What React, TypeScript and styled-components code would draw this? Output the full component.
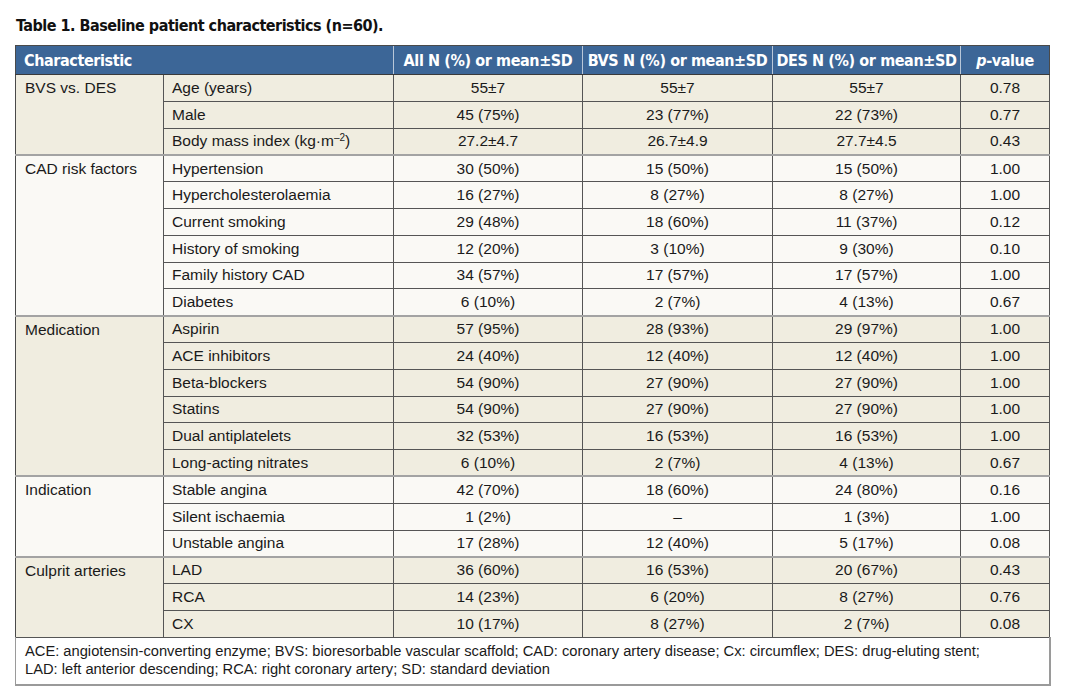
import React from "react";
import styled, { createGlobalStyle } from "styled-components";

const Global = createGlobalStyle`
  html, body { margin: 0; padding: 0; background: #ffffff; }
  body { font-family: "Liberation Sans", Arial, sans-serif; color: #1a1a1a; }
`;

const Page = styled.div`
  padding: 15px 15px 0 15px;
`;

const Title = styled.h1`
  margin: 0 0 8px 0;
  font-family: "DejaVu Sans Condensed", "Liberation Sans Narrow", "Liberation Sans", sans-serif;
  font-stretch: condensed;
  font-weight: 700;
  font-size: 16px;
  line-height: 22px;
  color: #111;
  letter-spacing: -0.5px;
  white-space: nowrap;
  padding-left: 1px;
`;

const Table = styled.table`
  width: 1034px;
  table-layout: fixed;
  border-collapse: collapse;
  border: 1px solid #4a4a4a;
  font-size: 15.5px;
`;

const HeadCell = styled.th<{ $align?: "left" | "center" }>`
  background: #3c6697;
  color: #ffffff;
  height: 28px;
  padding: 0 0 0 ${(p) => (p.$align === "left" ? "8px" : "0")};
  text-align: ${(p) => p.$align ?? "center"};
  font-family: "DejaVu Sans Condensed", "Liberation Sans Narrow", "Liberation Sans", sans-serif;
  font-stretch: condensed;
  font-weight: 700;
  font-size: 16px;
  letter-spacing: -0.4px;
  white-space: nowrap;
  border-left: 1px solid #b9c7d8;
  border-bottom: 1px solid #3a3a3a;
  border-top: 1px solid #4a4a4a;
  &:first-child { border-left: 1px solid #4a4a4a; }
  &:last-child { border-right: 1px solid #4a4a4a; }
`;

const Row = styled.tr<{ $first: boolean }>`
  height: 26.8px;
  & > td {
    border-top: ${(p) => (p.$first ? "2px solid #a3a3a3" : "1px solid #555")};
  }
`;

const GroupCell = styled.td<{ $tone: "beige" | "light" }>`
  background: ${(p) => (p.$tone === "beige" ? "#f0ede0" : "#faf9f5")};
  vertical-align: top;
  padding: 4px 0 0 9px;
  line-height: 18px;
  border-right: 1px solid #555;
`;

const ItemCell = styled.td<{ $tone: "beige" | "light" }>`
  background: ${(p) => (p.$tone === "beige" ? "#f0ede0" : "#faf9f5")};
  padding: 0 0 0 8px;
  line-height: 18px;
  white-space: nowrap;
  border-right: 1px solid #555;
`;

const ValueCell = styled.td<{ $tone: "beige" | "light" }>`
  background: ${(p) => (p.$tone === "beige" ? "#f0ede0" : "#faf9f5")};
  text-align: center;
  padding: 0;
  line-height: 18px;
  border-right: 1px solid #555;
`;

const Sup = styled.sup`
  font-size: 10px;
  line-height: 0;
  vertical-align: 5px;
`;

const FootCell = styled.td`
  background: #ffffff;
  border-top: 1px solid #555;
  border-left: 1px solid #9a9a9a;
  border-right: 2px solid #9a9a9a;
  border-bottom: 2px solid #9a9a9a;
  padding: 4px 0 6px 9px;
  font-size: 14.7px;
  line-height: 18px;
`;

type R = [React.ReactNode, string, string, string, string];
type Group = { name: string; rows: R[] };

const groups: Group[] = [
  {
    name: "BVS vs. DES",
    rows: [
      ["Age (years)", "55±7", "55±7", "55±7", "0.78"],
      ["Male", "45 (75%)", "23 (77%)", "22 (73%)", "0.77"],
      [
        <>
          Body mass index (kg·m<Sup>–2</Sup>)
        </>,
        "27.2±4.7",
        "26.7±4.9",
        "27.7±4.5",
        "0.43",
      ],
    ],
  },
  {
    name: "CAD risk factors",
    rows: [
      ["Hypertension", "30 (50%)", "15 (50%)", "15 (50%)", "1.00"],
      ["Hypercholesterolaemia", "16 (27%)", "8 (27%)", "8 (27%)", "1.00"],
      ["Current smoking", "29 (48%)", "18 (60%)", "11 (37%)", "0.12"],
      ["History of smoking", "12 (20%)", "3 (10%)", "9 (30%)", "0.10"],
      ["Family history CAD", "34 (57%)", "17 (57%)", "17 (57%)", "1.00"],
      ["Diabetes", "6 (10%)", "2 (7%)", "4 (13%)", "0.67"],
    ],
  },
  {
    name: "Medication",
    rows: [
      ["Aspirin", "57 (95%)", "28 (93%)", "29 (97%)", "1.00"],
      ["ACE inhibitors", "24 (40%)", "12 (40%)", "12 (40%)", "1.00"],
      ["Beta-blockers", "54 (90%)", "27 (90%)", "27 (90%)", "1.00"],
      ["Statins", "54 (90%)", "27 (90%)", "27 (90%)", "1.00"],
      ["Dual antiplatelets", "32 (53%)", "16 (53%)", "16 (53%)", "1.00"],
      ["Long-acting nitrates", "6 (10%)", "2 (7%)", "4 (13%)", "0.67"],
    ],
  },
  {
    name: "Indication",
    rows: [
      ["Stable angina", "42 (70%)", "18 (60%)", "24 (80%)", "0.16"],
      ["Silent ischaemia", "1 (2%)", "–", "1 (3%)", "1.00"],
      ["Unstable angina", "17 (28%)", "12 (40%)", "5 (17%)", "0.08"],
    ],
  },
  {
    name: "Culprit arteries",
    rows: [
      ["LAD", "36 (60%)", "16 (53%)", "20 (67%)", "0.43"],
      ["RCA", "14 (23%)", "6 (20%)", "8 (27%)", "0.76"],
      ["CX", "10 (17%)", "8 (27%)", "2 (7%)", "0.08"],
    ],
  },
];

export default function App() {
  return (
    <Page>
      <Global />
      <Title>Table 1. Baseline patient characteristics (n=60).</Title>
      <Table>
        <colgroup>
          <col style={{ width: 148 }} />
          <col style={{ width: 230 }} />
          <col style={{ width: 189 }} />
          <col style={{ width: 190 }} />
          <col style={{ width: 188 }} />
          <col style={{ width: 89 }} />
        </colgroup>
        <thead>
          <tr>
            <HeadCell colSpan={2} $align="left">
              Characteristic
            </HeadCell>
            <HeadCell>All N (%) or mean±SD</HeadCell>
            <HeadCell>BVS N (%) or mean±SD</HeadCell>
            <HeadCell>DES N (%) or mean±SD</HeadCell>
            <HeadCell>
              <i>p</i>-value
            </HeadCell>
          </tr>
        </thead>
        <tbody>
          {groups.map((g, gi) => {
            const tone = gi % 2 === 0 ? "beige" : "light";
            return g.rows.map((r, ri) => (
              <Row key={`${gi}-${ri}`} $first={ri === 0 && gi > 0}>
                {ri === 0 && (
                  <GroupCell rowSpan={g.rows.length} $tone={tone}>
                    {g.name}
                  </GroupCell>
                )}
                <ItemCell $tone={tone}>{r[0]}</ItemCell>
                <ValueCell $tone={tone}>{r[1]}</ValueCell>
                <ValueCell $tone={tone}>{r[2]}</ValueCell>
                <ValueCell $tone={tone}>{r[3]}</ValueCell>
                <ValueCell $tone={tone}>{r[4]}</ValueCell>
              </Row>
            ));
          })}
        </tbody>
        <tfoot>
          <tr>
            <FootCell colSpan={6}>
              ACE: angiotensin-converting enzyme; BVS: bioresorbable vascular scaffold; CAD: coronary artery disease; Cx:
              circumflex; DES: drug-eluting stent;
              <br />
              LAD: left anterior descending; RCA: right coronary artery; SD: standard deviation
            </FootCell>
          </tr>
        </tfoot>
      </Table>
    </Page>
  );
}
